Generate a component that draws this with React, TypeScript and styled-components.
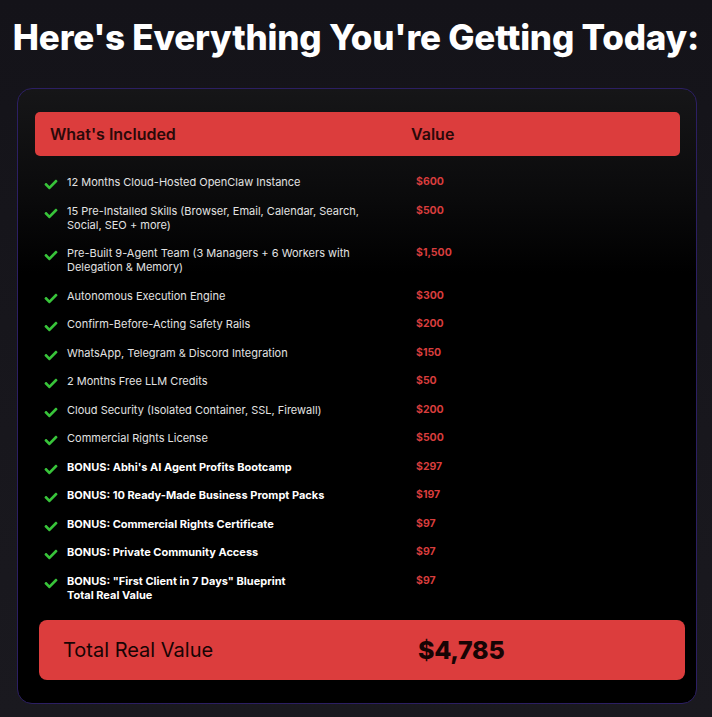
import styled, { createGlobalStyle } from "styled-components";
import { FaCheck } from "react-icons/fa";

const GlobalStyle = createGlobalStyle`
  html, body {
    margin: 0;
    padding: 0;
    background: #17161c;
  }
  body {
    font-family: Inter, "Noto Sans", sans-serif;
    -webkit-font-smoothing: antialiased;
  }
`;

const Page = styled.div`
  min-height: 717px;
  background: linear-gradient(180deg, #141319 0%, #18171d 60%, #1a191f 100%);
  padding: 15px 0 14px;
  box-sizing: border-box;
`;

const Title = styled.h1`
  margin: 0;
  text-align: center;
  color: #ffffff;
  font-family: Inter, sans-serif;
  font-weight: 800;
  font-size: 35px;
  line-height: 44px;
  letter-spacing: -0.2px;
`;

const Card = styled.div`
  margin: 29px 15px 0 17px;
  border: 1px solid #2c1f63;
  border-radius: 15px;
  background: linear-gradient(180deg, #161618 0%, #0a0a0b 18%, #000 30%, #000 100%);
  padding: 23px 16px 23px 17px;
`;

const HeaderBar = styled.div`
  display: grid;
  grid-template-columns: 361px 1fr;
  align-items: center;
  height: 44px;
  padding: 0 15px;
  background: #dc3d3d;
  border-radius: 5px;
  color: #2a0909;
  font-weight: 600;
  font-size: 16px;
`;

const List = styled.div`
  display: flex;
  flex-direction: column;
  gap: 14.5px;
  margin-top: 19px;
  padding-left: 9px;
`;

const Row = styled.div`
  display: grid;
  grid-template-columns: 23px 349px auto;
  align-items: start;
`;

const CheckCell = styled.div`
  height: 14px;
  overflow: visible;
  color: #38c43a;
  svg {
    display: block;
    width: 14px;
    height: 13px;
    transform: translateY(3px);
  }
`;

const ItemText = styled.div<{ $bold?: boolean }>`
  color: ${(p) => (p.$bold ? "#ffffff" : "#e2e2e2")};
  font-size: 11px;
  line-height: 14px;
  font-weight: ${(p) => (p.$bold ? 700 : 400)};
  max-width: 300px;
`;

const Price = styled.div`
  color: #d83d3d;
  font-size: 10.5px;
  line-height: 14px;
  font-weight: 700;
`;

const TotalBar = styled.div`
  display: grid;
  grid-template-columns: 355px auto;
  align-items: center;
  height: 60px;
  margin: 18px -5px 0 4px;
  padding: 0 24px;
  background: #dc3d3d;
  border-radius: 8px;
  color: #170404;
`;

const TotalLabel = styled.div`
  font-size: 20px;
  font-weight: 400;
`;

const TotalValue = styled.div`
  font-size: 25px;
  font-weight: 800;
  letter-spacing: -0.3px;
`;

const items: { text: React.ReactNode; price: string; bold?: boolean }[] = [
  { text: "12 Months Cloud-Hosted OpenClaw Instance", price: "$600" },
  {
    text: "15 Pre-Installed Skills (Browser, Email, Calendar, Search, Social, SEO + more)",
    price: "$500",
  },
  {
    text: "Pre-Built 9-Agent Team (3 Managers + 6 Workers with Delegation & Memory)",
    price: "$1,500",
  },
  { text: "Autonomous Execution Engine", price: "$300" },
  { text: "Confirm-Before-Acting Safety Rails", price: "$200" },
  { text: "WhatsApp, Telegram & Discord Integration", price: "$150" },
  { text: "2 Months Free LLM Credits", price: "$50" },
  { text: "Cloud Security (Isolated Container, SSL, Firewall)", price: "$200" },
  { text: "Commercial Rights License", price: "$500" },
  { text: "BONUS: Abhi's AI Agent Profits Bootcamp", price: "$297", bold: true },
  { text: "BONUS: 10 Ready-Made Business Prompt Packs", price: "$197", bold: true },
  { text: "BONUS: Commercial Rights Certificate", price: "$97", bold: true },
  { text: "BONUS: Private Community Access", price: "$97", bold: true },
  {
    text: (
      <>
        BONUS: "First Client in 7 Days" Blueprint
        <br />
        Total Real Value
      </>
    ),
    price: "$97",
    bold: true,
  },
];

export default function App() {
  return (
    <>
      <GlobalStyle />
      <Page>
        <Title>Here's Everything You're Getting Today:</Title>
        <Card>
          <HeaderBar>
            <span>What's Included</span>
            <span>Value</span>
          </HeaderBar>
          <List>
            {items.map((item, i) => (
              <Row key={i}>
                <CheckCell>
                  <FaCheck />
                </CheckCell>
                <ItemText $bold={item.bold}>{item.text}</ItemText>
                <Price>{item.price}</Price>
              </Row>
            ))}
          </List>
          <TotalBar>
            <TotalLabel>Total Real Value</TotalLabel>
            <TotalValue>$4,785</TotalValue>
          </TotalBar>
        </Card>
      </Page>
    </>
  );
}
